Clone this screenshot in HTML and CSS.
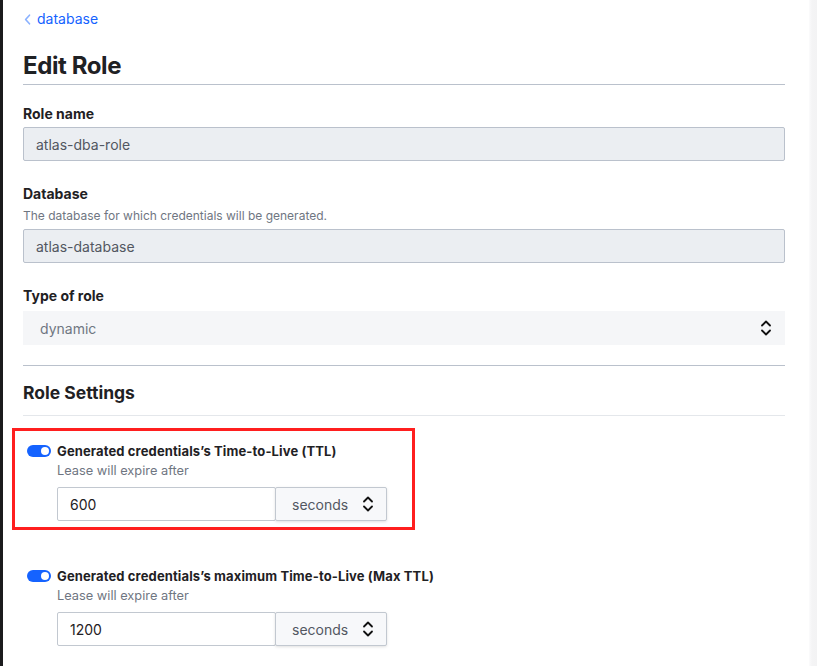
FILE: index.html
```html
<!DOCTYPE html>
<html lang="en">
<head>
<meta charset="utf-8">
<title>Edit Role</title>
<link rel="stylesheet" href="styles.css">
</head>
<body>
<div class="frame">
  <div class="side-strip"></div>
  <main class="page">
    <nav class="breadcrumb">
      <svg class="crumb-chevron" width="7" height="11" viewBox="0 0 7 11"><path d="M5.5 1.2 L1.6 5.5 L5.5 9.8" fill="none" stroke="#8ab1ff" stroke-width="1.6" stroke-linecap="round" stroke-linejoin="round"/></svg>
      <a class="crumb-link" href="#">database</a>
    </nav>
    <h1 class="title">Edit Role</h1>

    <div class="field">
      <label class="label">Role name</label>
      <div class="input disabled">atlas-dba-role</div>
    </div>

    <div class="field">
      <label class="label">Database</label>
      <p class="help">The database for which credentials will be generated.</p>
      <div class="input disabled">atlas-database</div>
    </div>

    <div class="field">
      <label class="label">Type of role</label>
      <div class="select-plain">
        <span>dynamic</span>
        <svg class="updown" width="12" height="18" viewBox="0 0 12 18"><path d="M2 6.5 L6 2.5 L10 6.5 M2 11.5 L6 15.5 L10 11.5" fill="none" stroke="#111" stroke-width="1.8" stroke-linecap="round" stroke-linejoin="round"/></svg>
      </div>
    </div>

    <hr class="rule">
    <h2 class="section-title">Role Settings</h2>
    <hr class="rule light">

    <div class="ttl highlight">
      <span class="toggle"><span class="knob"></span></span>
      <div class="ttl-body">
        <div class="ttl-label">Generated credentials’s Time-to-Live (TTL)</div>
        <div class="ttl-help">Lease will expire after</div>
        <div class="ttl-inputs">
          <div class="input value">600</div>
          <div class="unit-select">
            <span>seconds</span>
            <svg class="updown" width="12" height="18" viewBox="0 0 12 18"><path d="M2 6.5 L6 2.5 L10 6.5 M2 11.5 L6 15.5 L10 11.5" fill="none" stroke="#111" stroke-width="1.8" stroke-linecap="round" stroke-linejoin="round"/></svg>
          </div>
        </div>
      </div>
    </div>

    <div class="ttl">
      <span class="toggle"><span class="knob"></span></span>
      <div class="ttl-body">
        <div class="ttl-label">Generated credentials’s maximum Time-to-Live (Max TTL)</div>
        <div class="ttl-help">Lease will expire after</div>
        <div class="ttl-inputs">
          <div class="input value">1200</div>
          <div class="unit-select">
            <span>seconds</span>
            <svg class="updown" width="12" height="18" viewBox="0 0 12 18"><path d="M2 6.5 L6 2.5 L10 6.5 M2 11.5 L6 15.5 L10 11.5" fill="none" stroke="#111" stroke-width="1.8" stroke-linecap="round" stroke-linejoin="round"/></svg>
          </div>
        </div>
      </div>
    </div>
  </main>
  <div class="right-shade"></div>
</div>
</body>
</html>
```
FILE: styles.css
```css
* { box-sizing: border-box; }
html, body { margin: 0; padding: 0; height: 100%; }
body {
  font-family: Inter, "Noto Sans", "Liberation Sans", sans-serif;
  color: #1f2124;
  background: #ffffff;
  overflow: hidden;
}
.frame {
  display: flex;
  height: 666px;
  width: 817px;
}
.side-strip {
  width: 3px;
  flex: 0 0 3px;
  background: #1b1b1d;
}
.page {
  flex: 0 0 806px;
  padding: 9px 24px 0 20px;
}
.right-shade {
  flex: 1;
  background: linear-gradient(to right, #fbfbfc, #f4f4f5 40%, #f3f3f4);
}
.breadcrumb {
  display: flex;
  align-items: center;
  gap: 6px;
  height: 20px;
  padding-left: 1px;
}
.crumb-chevron { display: block; }
.crumb-link {
  color: #1563ff;
  text-decoration: none;
  font-size: 14px;
  line-height: 20px;
}
.title {
  margin: 21px 0 0;
  font-size: 24px;
  line-height: 32px;
  font-weight: 700;
  letter-spacing: -0.4px;
  padding-bottom: 2px;
  border-bottom: 1px solid #bac1cc;
}
.field { margin-top: 19px; }
.field + .field { margin-top: 23px; }
.label {
  display: block;
  font-size: 14px;
  line-height: 20px;
  font-weight: 700;
  color: #1f2124;
}
.help {
  margin: 4px 0 0;
  font-size: 12px;
  line-height: 16px;
  color: #6f7682;
}
.input {
  height: 34px;
  display: flex;
  align-items: center;
  padding: 0 12px;
  font-size: 14px;
  border: 1px solid #bac1cc;
  border-radius: 2px;
}
.input.disabled {
  margin-top: 3px;
  background: #ebeef2;
  color: #525761;
}
.help + .input.disabled { margin-top: 5px; }
.select-plain {
  margin-top: 5px;
  height: 34px;
  display: flex;
  align-items: center;
  justify-content: space-between;
  padding: 0 13px 0 17px;
  background: #f5f6f8;
  color: #6f7682;
  font-size: 14px;
}
.updown { display: block; }
.rule {
  margin: 20px 0 0;
  border: 0;
  border-top: 1px solid #bac1cc;
  height: 0;
}
.rule.light { margin-top: 10px; border-top-color: #e4e7eb; }
.section-title {
  margin: 15px 0 0;
  font-size: 17.5px;
  line-height: 24px;
  font-weight: 700;
}
.ttl {
  display: flex;
  gap: 6px;
  width: 403px;
  margin: 23px 0 0 -11px;
  padding: 11px 12px 6px;
  border: 3px solid transparent;
}
.ttl.highlight {
  margin-top: 12px;
  border-color: #ff1f1f;
}
.toggle {
  flex: 0 0 24px;
  width: 24px;
  height: 12px;
  margin-top: 3px;
  border-radius: 6px;
  background: #1563ff;
  position: relative;
}
.knob {
  position: absolute;
  right: 2px;
  top: 2px;
  width: 8px;
  height: 8px;
  border-radius: 50%;
  background: #fff;
}
.ttl-body { flex: 1; }
.ttl-label {
  font-size: 13px;
  line-height: 18px;
  font-weight: 700;
  letter-spacing: 0.12px;
  white-space: nowrap;
}
.ttl-help {
  margin-top: 2px;
  font-size: 12.8px;
  line-height: 18px;
  color: #6f7682;
}
.ttl-inputs {
  margin-top: 7px;
  display: flex;
}
.input.value {
  width: 219px;
  background: #fff;
  color: #1f2124;
  border-color: #c2c8d0;
}
.unit-select {
  width: 112px;
  height: 34px;
  margin-left: -1px;
  display: flex;
  align-items: center;
  justify-content: space-between;
  padding: 0 12px 0 16px;
  background: #f7f8fa;
  border: 1px solid #c2c8d0;
  border-radius: 2px;
  box-shadow: 0 1px 3px rgba(0,0,0,0.12);
  font-size: 14px;
  color: #525761;
}
```
